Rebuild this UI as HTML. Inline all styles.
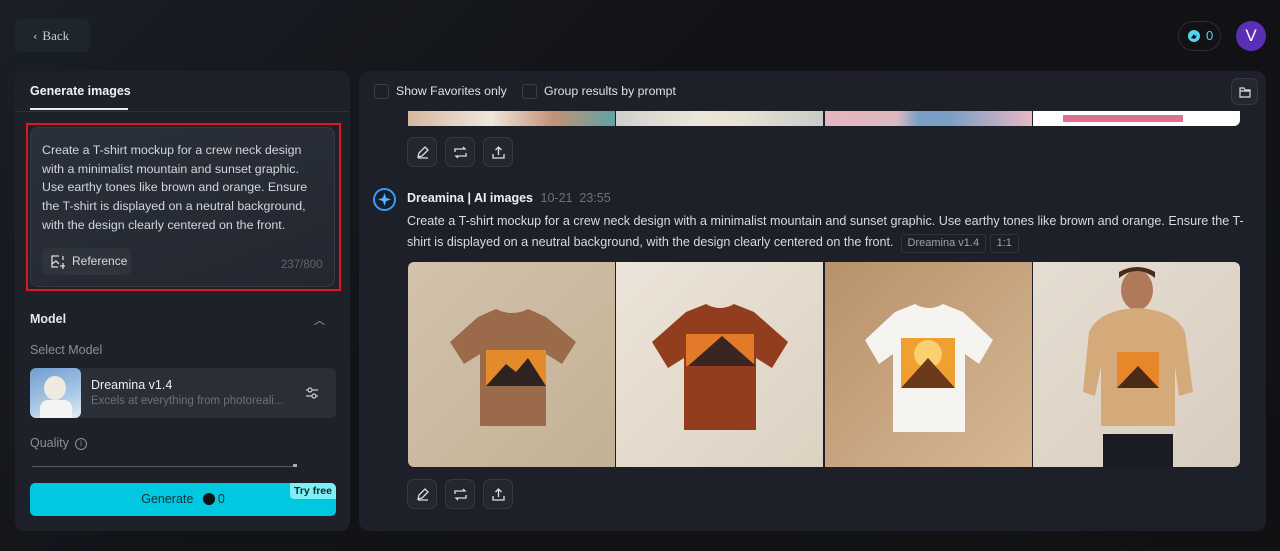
<!DOCTYPE html>
<html><head><meta charset="utf-8"><style>
*{box-sizing:border-box;margin:0;padding:0}
body{width:1280px;height:551px;overflow:hidden;background:linear-gradient(135deg,#1a1f26 0%,#121317 40%,#111114 100%);font-family:"Liberation Sans",sans-serif;color:#e6e8ec;position:relative}
.abs{position:absolute}
.back{left:15px;top:19px;width:75px;height:33px;background:#1f252d;border-radius:6px;color:#c9ccd2;font-family:"Liberation Serif",serif;font-size:13px;line-height:33px;padding-left:18px}
.credit{left:1178px;top:21px;width:43px;height:30px;border:1px solid #2a2d33;border-radius:15px;color:#4fd6ee;font-size:13px;line-height:28px;padding-left:27px}
.av{left:1236px;top:21px;width:30px;height:30px;border-radius:50%;background:#5a2fb5;color:#fff;text-align:center;line-height:30px;font-size:17px;font-family:"Liberation Sans",sans-serif}
.lp{left:15px;top:71px;width:335px;height:460px;background:#1e2129;border-radius:10px}
.rp{left:359px;top:71px;width:907px;height:460px;background:#1d2028;border-radius:10px;overflow:hidden}
.ta{left:30px;top:127px;width:305px;height:160px;background:linear-gradient(160deg,#2a303a,#232730);border:1px solid #353b45;border-radius:8px;font-size:12.4px;line-height:18.7px;color:#d3d7dd;padding:13px 22px 13px 11px}
.red{left:26px;top:123px;width:315px;height:168px;border:2px solid #e3141f}
.ic{width:30px;height:30px;border:1px solid #363a43;background:#232730;border-radius:7px}
.img{top:191px;width:207px;height:205px;overflow:hidden}
.chk{width:15px;height:15px;border:1px solid #3a3e46;border-radius:3px}
.tag{border:1px solid #30343c;border-radius:3px;font-size:11px;color:#9da2aa;padding:2px 6px;display:inline-block;line-height:13px}
</style></head><body>
<div class="abs back"><span style="font-family:'DejaVu Sans';font-size:11px;margin-right:5px">‹</span>Back</div>
<div class="abs credit"><svg class="abs" style="left:9px;top:8px" width="12" height="12"><circle cx="6" cy="6" r="6" fill="#4fd6ee"/><path d="M3 8l3-4 1 2 2-1-2 4z" fill="#111"/></svg>0</div>
<div class="abs av">V</div>

<div class="abs lp"></div>
<div class="abs" style="left:30px;top:84px;font-size:12.5px;font-weight:bold;color:#f0f2f5">Generate images</div>
<div class="abs" style="left:30px;top:108px;width:98px;height:2px;background:#e8eaee"></div>
<div class="abs" style="left:15px;top:111px;width:335px;height:1px;background:#2d313a"></div>
<div class="abs ta">Create a T-shirt mockup for a crew neck design with a minimalist mountain and sunset graphic. Use earthy tones like brown and orange. Ensure the T-shirt is displayed on a neutral background, with the design clearly centered on the front.</div>
<div class="abs" style="left:42px;top:248px;width:89px;height:27px;background:#2e333c;border-radius:5px;font-size:12px;color:#d8dbe0;line-height:27px;padding-left:30px"><svg class="abs" style="left:9px;top:7px" width="14" height="14" fill="none" stroke="#d8dbe0" stroke-width="1.3"><path d="M8 1H1v11h6M1 9l4-3 3 3M12 8v6M9 11h6M12 1v4"/></svg>Reference</div>
<div class="abs" style="left:281px;top:259px;font-size:11.5px;color:#5f646c">237/800</div>
<div class="abs red"></div>

<div class="abs" style="left:30px;top:312px;font-size:12.5px;font-weight:bold">Model</div>
<div class="abs" style="left:314px;top:312px;font-size:11px;color:#aaa">︿</div>
<div class="abs" style="left:30px;top:343px;font-size:12.5px;color:#8a8f97">Select Model</div>
<div class="abs" style="left:30px;top:368px;width:306px;height:50px;background:#2a2e37;border-radius:6px"></div>
<div class="abs" style="left:30px;top:368px;width:51px;height:50px;border-radius:6px;overflow:hidden;background:linear-gradient(160deg,#6f9ed0,#a9c8e6 60%,#e8eef4)"><div class="abs" style="left:14px;top:8px;width:22px;height:24px;border-radius:50%;background:#efe9e0"></div><div class="abs" style="left:10px;top:32px;width:32px;height:18px;background:#f4f4f4;border-radius:8px 8px 0 0"></div></div>
<div class="abs" style="left:91px;top:378px;font-size:12.5px;color:#eceef1">Dreamina v1.4</div>
<div class="abs" style="left:91px;top:395px;font-size:11.5px;color:#6b7079">Excels at everything from photoreali...</div>
<svg class="abs" style="left:305px;top:386px" width="14" height="14" fill="none" stroke="#ccc" stroke-width="1.2"><path d="M1 4h12M1 10h12"/><circle cx="5" cy="4" r="2" fill="#2a2e37"/><circle cx="9" cy="10" r="2" fill="#2a2e37"/></svg>
<div class="abs" style="left:30px;top:436px;font-size:12.5px;color:#8a8f97">Quality</div>
<div class="abs" style="left:75px;top:438px;width:12px;height:12px;border:1px solid #8a8f97;border-radius:50%;font-size:8px;text-align:center;line-height:10px;color:#8a8f97">i</div>
<div class="abs" style="left:32px;top:466px;width:265px;height:1px;background:#555a62"></div>
<div class="abs" style="left:293px;top:464px;width:4px;height:3px;background:#aaa"></div>
<div class="abs" style="left:30px;top:483px;width:306px;height:33px;background:#00c8e0;border-radius:5px;color:#14323a;font-size:12.5px;text-align:center;line-height:33px">Generate <span style="display:inline-block;width:12px;height:12px;border-radius:50%;background:#111;vertical-align:-2px;margin:0 3px 0 6px"></span>0</div>
<div class="abs" style="left:290px;top:483px;width:46px;height:16px;background:#7ef0f5;border-radius:0 5px 0 4px;color:#0e2a30;font-size:10.5px;font-weight:bold;text-align:center;line-height:16px">Try free</div>

<div class="abs rp">
 <div class="abs" style="left:49px;top:30px;width:832px;height:25px;overflow:hidden">
  <div class="abs" style="left:0;top:0;width:207px;height:25px;background:linear-gradient(90deg,#d8b8a0 0,#efe6dc 40%,#c49275 70%,#5fa2a8)"></div>
  <div class="abs" style="left:208px;top:0;width:207px;height:25px;background:linear-gradient(90deg,#cfd0cc,#ece6da 40%,#e8e2d6 60%,#c9cac6)"></div>
  <div class="abs" style="left:417px;top:0;width:207px;height:25px;background:linear-gradient(90deg,#e6b5c0,#dcb8c0 35%,#7b9fc4 45%,#7b9fc4 60%,#e7b8c4)"></div>
  <div class="abs" style="left:625px;top:0;width:207px;height:25px;background:#fff;border-radius:0 0 6px 0"><div class="abs" style="left:30px;top:14px;width:120px;height:7px;background:#e07090"></div></div>
 </div>
 <div class="abs" style="left:0;top:0;width:907px;height:40px;background:#1d2028"></div>
 <div class="abs chk" style="left:15px;top:13px"></div>
 <div class="abs" style="left:37px;top:13px;font-size:12.3px;color:#dfe2e6">Show Favorites only</div>
 <div class="abs chk" style="left:163px;top:13px"></div>
 <div class="abs" style="left:185px;top:13px;font-size:12.3px;color:#dfe2e6">Group results by prompt</div>
 <div class="abs ic" style="left:872px;top:7px;width:27px;height:27px"><svg class="abs" style="left:6px;top:6px" width="14" height="14" fill="none" stroke="#ddd" stroke-width="1.2"><path d="M2 3h4l1 2h5v7H2zM2 6h10"/></svg></div>
 <div class="abs ic" style="left:48px;top:66px"><svg class="abs" style="left:7px;top:7px" width="15" height="15" fill="none" stroke="#ddd" stroke-width="1.3"><path d="M3 12l1-4 6-6 3 3-6 6zM3 13h10"/></svg></div>
 <div class="abs ic" style="left:86px;top:66px"><svg class="abs" style="left:7px;top:7px" width="15" height="15" fill="none" stroke="#ddd" stroke-width="1.3"><path d="M2 7V4h10l-2-2M13 8v3H3l2 2"/></svg></div>
 <div class="abs ic" style="left:124px;top:66px"><svg class="abs" style="left:7px;top:7px" width="15" height="15" fill="none" stroke="#ddd" stroke-width="1.3"><path d="M7.5 10V2M4.5 5l3-3 3 3M2 9v4h11V9"/></svg></div>

 <svg class="abs" style="left:14px;top:117px" width="23" height="23"><circle cx="11.5" cy="11.5" r="10.5" fill="#13202e" stroke="#3b9bf0" stroke-width="2"/><path d="M11.5 5l1.6 4.9 4.9 1.6-4.9 1.6-1.6 4.9-1.6-4.9-4.9-1.6 4.9-1.6z" fill="#5ab4ff"/></svg>
 <div class="abs" style="left:48px;top:120px;font-size:12.5px"><b style="color:#eef0f3">Dreamina | AI images</b> <span style="color:#6c717a;margin-left:4px">10-21 &nbsp;23:55</span></div>
 <div class="abs" style="left:48px;top:140px;width:840px;font-size:12.6px;line-height:21px;color:#d8dbe0">Create a T-shirt mockup for a crew neck design with a minimalist mountain and sunset graphic. Use earthy tones like brown and orange. Ensure the T-shirt is displayed on a neutral background, with the design clearly centered on the front. &nbsp;<span class="tag">Dreamina v1.4</span> <span class="tag">1:1</span></div>

 <div class="abs img" style="left:49px;background:linear-gradient(135deg,#d3c2ab,#c3b196);border-radius:6px 0 0 6px"><svg width="207" height="205"><path d="M70 55l18-8q16 8 32 0l18 8 30 25-14 22-16-10v72H72V92l-16 10-14-22z" fill="#9a6a4a"/><rect x="78" y="88" width="60" height="36" fill="#e38a2a"/><path d="M78 124l20-22 10 8 12-14 18 28z" fill="#2e2320"/></svg></div>
 <div class="abs img" style="left:257px;background:linear-gradient(135deg,#ece4d8,#dcd2c2)"><svg width="207" height="205"><path d="M70 50l20-8q14 8 28 0l20 8 34 30-16 26-16-10v72H68V96l-16 10-16-26z" fill="#923e1e"/><rect x="70" y="72" width="68" height="32" fill="#e27a2a"/><path d="M72 104l34-30 34 30z" fill="#3a2520"/></svg></div>
 <div class="abs img" style="left:466px;background:linear-gradient(135deg,#b8916a,#d6b894)"><svg width="207" height="205"><path d="M70 50l20-8q14 8 28 0l20 8 30 28-14 24-14-10v78H68V92l-14 10-14-24z" fill="#f6f4f0"/><rect x="76" y="76" width="54" height="50" fill="#f0a030"/><circle cx="103" cy="92" r="14" fill="#fbd070"/><path d="M76 126l27-30 27 30z" fill="#6a3a1a"/></svg></div>
 <div class="abs img" style="left:674px;background:linear-gradient(135deg,#e6ddd2,#d8cdc0);border-radius:0 6px 6px 0"><svg width="207" height="205"><ellipse cx="104" cy="28" rx="16" ry="20" fill="#b07a5a"/><path d="M86 16q18-14 36 0v-6q-18-10-36 0z" fill="#4a2a1a"/><path d="M56 70q10-22 48-24 38 2 48 24l8 60-14 4-4-30v60H68v-60l-6 30-12-4z" fill="#d4aa7a"/><rect x="84" y="90" width="42" height="36" fill="#e8872a"/><path d="M84 126l21-22 21 22z" fill="#4a2a18"/><rect x="70" y="172" width="70" height="33" fill="#1a1c24"/></svg></div>

 <div class="abs ic" style="left:48px;top:408px"><svg class="abs" style="left:7px;top:7px" width="15" height="15" fill="none" stroke="#ddd" stroke-width="1.3"><path d="M3 12l1-4 6-6 3 3-6 6zM3 13h10"/></svg></div>
 <div class="abs ic" style="left:86px;top:408px"><svg class="abs" style="left:7px;top:7px" width="15" height="15" fill="none" stroke="#ddd" stroke-width="1.3"><path d="M2 7V4h10l-2-2M13 8v3H3l2 2"/></svg></div>
 <div class="abs ic" style="left:124px;top:408px"><svg class="abs" style="left:7px;top:7px" width="15" height="15" fill="none" stroke="#ddd" stroke-width="1.3"><path d="M7.5 10V2M4.5 5l3-3 3 3M2 9v4h11V9"/></svg></div>
</div>
</body></html>
